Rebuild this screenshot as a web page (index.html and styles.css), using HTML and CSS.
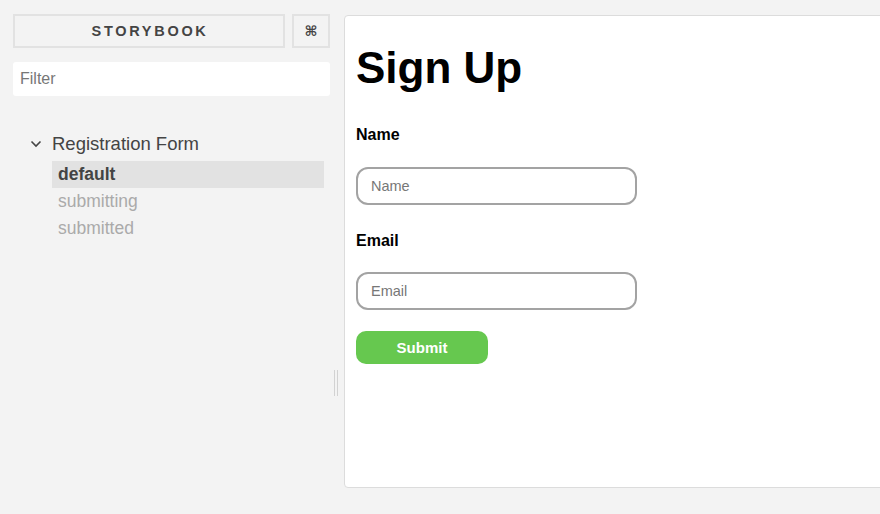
FILE: index.html
```html
<!DOCTYPE html>
<html>
<head>
<meta charset="utf-8">
<link rel="stylesheet" href="styles.css">
</head>
<body>
<div class="app">
  <aside class="sidebar">
    <div class="top">
      <div class="brand">STORYBOOK</div>
      <div class="shortcut">⌘</div>
    </div>
    <div class="filter">Filter</div>
    <div class="tree">
      <div class="kind">
        <svg class="chev" width="12" height="8" viewBox="0 0 12 8"><path d="M1.5 1.5 L6 6 L10.5 1.5" fill="none" stroke="#444" stroke-width="1.6"/></svg>
        <span>Registration Form</span>
      </div>
      <div class="stories">
        <div class="story active">default</div>
        <div class="story">submitting</div>
        <div class="story">submitted</div>
      </div>
    </div>
  </aside>
  <div class="resizer"><span></span><span></span></div>
  <main class="preview">
    <h1 class="title">Sign Up</h1>
    <label class="label">Name</label>
    <div class="input">Name</div>
    <label class="label">Email</label>
    <div class="input">Email</div>
    <div class="submit">Submit</div>
  </main>
</div>
</body>
</html>
```
FILE: styles.css
```css
html, body {
  margin: 0;
  padding: 0;
  height: 100%;
  background: #f3f3f3;
  font-family: "Liberation Sans", Arial, sans-serif;
  overflow: hidden;
}
.app {
  display: flex;
  height: 514px;
}
.sidebar {
  width: 317px;
  padding: 14px 0 0 13px;
  flex: none;
}
.top {
  display: flex;
  gap: 7px;
  height: 34px;
}
.brand {
  width: 267px;
  border: 2px solid #e2e2e2;
  display: flex;
  align-items: center;
  justify-content: center;
  font-weight: bold;
  font-size: 14.5px;
  letter-spacing: 2.7px;
  color: #444;
  padding-left: 2px;
}
.shortcut {
  width: 34px;
  border: 2px solid #e2e2e2;
  display: flex;
  align-items: center;
  justify-content: center;
  font-family: "DejaVu Sans", sans-serif;
  font-weight: bold;
  font-size: 14px;
  color: #444;
}
.filter {
  margin-top: 14px;
  height: 34px;
  background: #fff;
  border-radius: 3px;
  display: flex;
  align-items: center;
  padding-left: 7px;
  font-size: 16px;
  color: #777;
}
.tree {
  margin-top: 35px;
}
.kind {
  display: flex;
  align-items: center;
  height: 26px;
  padding-left: 17px;
  color: #444;
  font-size: 18.5px;
}
.chev {
  margin-right: 10px;
}
.stories {
  margin-top: 4px;
  margin-left: 39px;
  margin-right: 6px;
}
.story {
  height: 27px;
  display: flex;
  align-items: center;
  padding-left: 6px;
  font-size: 17.5px;
  color: #aaa;
}
.story.active {
  background: #e2e2e2;
  color: #444;
  font-weight: bold;
}
.resizer {
  width: 14px;
  flex: none;
  display: flex;
  justify-content: center;
  align-items: center;
  gap: 2px;
  padding-top: 252px;
  padding-right: 2px;
  box-sizing: border-box;
}
.resizer span {
  width: 1px;
  height: 26px;
  background: #d2d2d2;
}
.preview {
  margin-top: 15px;
  height: 471px;
  flex: 1;
  margin-right: -20px;
  background: #fff;
  border: 1px solid #dcdcdc;
  border-radius: 4px;
  padding: 0 11px;
  display: flex;
  flex-direction: column;
  align-items: flex-start;
}
.title {
  margin: 26px 0 0;
  font-size: 44px;
  line-height: 52px;
  font-weight: bold;
  color: #000;
}
.label {
  font-size: 16px;
  font-weight: bold;
  color: #000;
  line-height: 20px;
}
.title + .label { margin-top: 31px; }
.input {
  height: 34px;
  border: 2px solid #a3a3a3;
  border-radius: 12px;
  display: flex;
  align-items: center;
  padding-left: 13px;
  font-size: 14.5px;
  color: #777;
  width: 264px;
}
.label + .input { margin-top: 22px; }
.input + .label { margin-top: 26px; }
.input + .label + .input { margin-top: 21px; }
.submit {
  margin-top: 21px;
  width: 132px;
  height: 33px;
  border-radius: 10px;
  background: #66c84f;
  color: #fff;
  font-weight: bold;
  font-size: 15px;
  display: flex;
  align-items: center;
  justify-content: center;
}
```
